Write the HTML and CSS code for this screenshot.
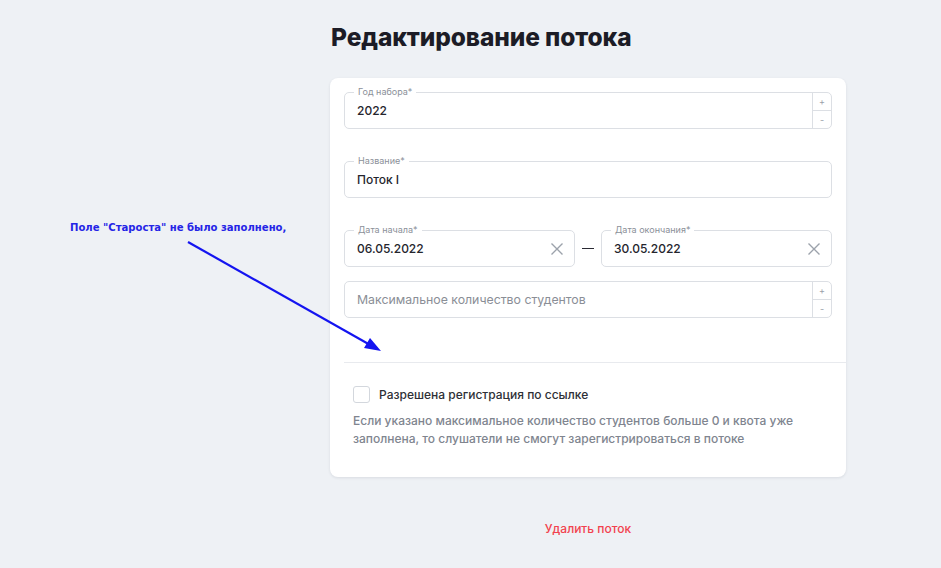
FILE: index.html
```html
<!DOCTYPE html>
<html lang="ru">
<head>
<meta charset="utf-8">
<title>Редактирование потока</title>
<link rel="stylesheet" href="styles.css">
</head>
<body>
<div class="page">
  <div class="column">
    <h1 class="title">Редактирование потока</h1>
    <div class="card">
      <div class="field">
        <span class="label">Год набора*</span>
        <div class="value">2022</div>
        <div class="stepper"><span class="step">+</span><span class="step">-</span></div>
      </div>
      <div class="field gap-lg">
        <span class="label">Название*</span>
        <div class="value">Поток I</div>
      </div>
      <div class="date-row gap-lg">
        <div class="field flex1">
          <span class="label">Дата начала*</span>
          <div class="value">06.05.2022</div>
          <svg class="clear" width="14" height="14" viewBox="0 0 14 14"><path d="M1.5 1.5L12.5 12.5M12.5 1.5L1.5 12.5" stroke="#9ca2ab" stroke-width="1.4" fill="none"/></svg>
        </div>
        <span class="dash"></span>
        <div class="field flex1">
          <span class="label">Дата окончания*</span>
          <div class="value">30.05.2022</div>
          <svg class="clear" width="14" height="14" viewBox="0 0 14 14"><path d="M1.5 1.5L12.5 12.5M12.5 1.5L1.5 12.5" stroke="#9ca2ab" stroke-width="1.4" fill="none"/></svg>
        </div>
      </div>
      <div class="field gap-sm">
        <div class="value placeholder">Максимальное количество студентов</div>
        <div class="stepper"><span class="step">+</span><span class="step">-</span></div>
      </div>
      <div class="divider"></div>
      <div class="check-row">
        <span class="checkbox"></span>
        <span class="check-label">Разрешена регистрация по ссылке</span>
      </div>
      <p class="hint">Если указано максимальное количество студентов больше 0 и квота уже заполнена, то слушатели не смогут зарегистрироваться в потоке</p>
    </div>
    <div class="delete-row"><span class="delete">Удалить поток</span></div>
  </div>
  <div class="note">Поле "Староста" не было заполнено,</div>
  <svg class="arrow" width="941" height="568" viewBox="0 0 941 568">
    <line x1="188" y1="242" x2="372" y2="346" stroke="#1414f0" stroke-width="2.2"/>
    <polygon points="381,351 364,348 370,338" fill="#1414f0"/>
  </svg>
</div>
</body>
</html>
```
FILE: styles.css
```css
html, body {
  margin: 0;
  padding: 0;
  background: #eef1f5;
}
body {
  font-family: Inter, "Noto Sans", sans-serif;
  width: 941px;
  height: 568px;
  overflow: hidden;
}
.page {
  position: relative;
  width: 941px;
  height: 568px;
}
.column {
  margin-left: 330px;
  width: 516px;
  padding-top: 21px;
}
.title {
  margin: 0 0 0 1px;
  font-size: 24.5px;
  line-height: 32px;
  font-weight: 800;
  color: #1c1c26;
  letter-spacing: -0.1px;
}
.card {
  margin-top: 25px;
  background: #fff;
  border-radius: 8px;
  box-shadow: 0 1px 3px rgba(30, 40, 60, 0.10);
  padding: 14px 14px 29px 14px;
}
.field {
  position: relative;
  height: 37px;
  box-sizing: border-box;
  border: 1px solid #dcdfe4;
  border-radius: 5px;
  display: flex;
  align-items: center;
}
.flex1 { flex: 1; }
.gap-lg { margin-top: 32px; }
.gap-sm { margin-top: 14px; }
.label {
  position: absolute;
  left: 9px;
  top: -7px;
  padding: 0 4px;
  background: #fff;
  font-size: 9px;
  line-height: 12px;
  color: #8b9099;
}
.value {
  flex: 1;
  padding-left: 12px;
  font-size: 12px;
  font-weight: 500;
  color: #25252d;
}
.placeholder {
  color: #8a8e96;
  font-weight: 400;
  font-size: 12.3px;
}
.stepper {
  width: 18px;
  align-self: stretch;
  border-left: 1px solid #dcdfe4;
  display: flex;
  flex-direction: column;
}
.step {
  flex: 1;
  display: flex;
  align-items: center;
  justify-content: center;
  font-size: 9px;
  color: #9aa0a8;
}
.step + .step {
  border-top: 1px solid #dcdfe4;
}
.clear {
  margin-right: 10px;
}
.date-row {
  display: flex;
  align-items: center;
}
.dash {
  width: 12px;
  height: 1.5px;
  background: #2a2a33;
  margin: 0 7px;
}
.divider {
  margin-top: 44px;
  margin-right: -14px;
  height: 1px;
  background: #e8eaee;
}
.check-row {
  margin-top: 23px;
  margin-left: 9px;
  display: flex;
  align-items: center;
}
.checkbox {
  width: 15px;
  height: 15px;
  border: 1px solid #d3d7dd;
  border-radius: 3px;
  background: #fff;
}
.check-label {
  margin-left: 9px;
  font-size: 12px;
  font-weight: 500;
  color: #2e2f36;
}
.hint {
  margin: 9px 0 0 9px;
  font-size: 12px;
  line-height: 18px;
  font-weight: 500;
  color: #80858f;
  max-width: 460px;
}
.delete-row {
  display: flex;
  justify-content: center;
  margin-top: 44px;
}
.delete {
  font-size: 12px;
  font-weight: 500;
  color: #f2424e;
}
.note {
  position: absolute;
  left: 70px;
  top: 221px;
  font-family: "DejaVu Sans Condensed", "DejaVu Sans", sans-serif;
  font-weight: bold;
  font-size: 11.2px;
  color: #2424e6;
}
.arrow {
  position: absolute;
  left: 0;
  top: 0;
  pointer-events: none;
}
```
